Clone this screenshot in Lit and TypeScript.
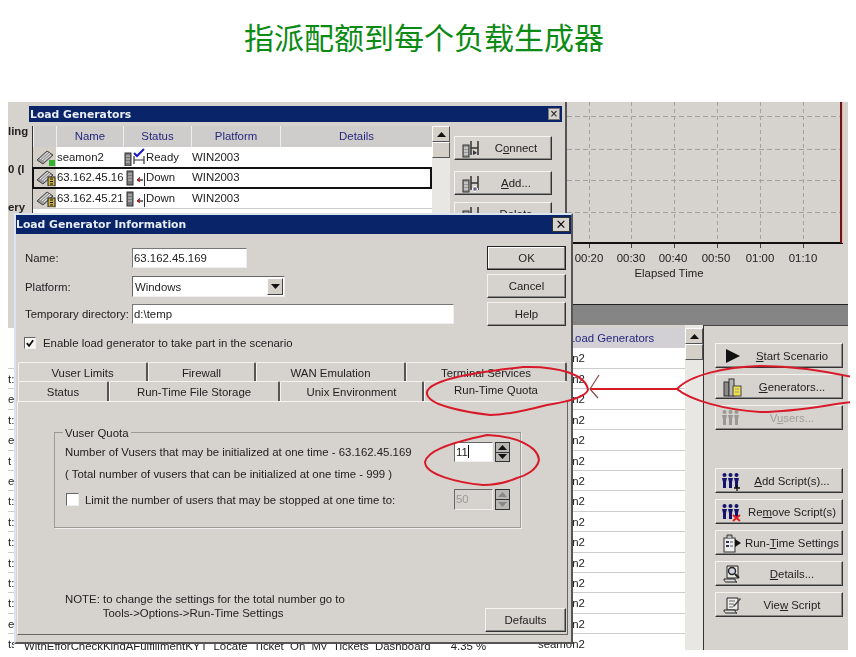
import { LitElement, html, css, svg } from "lit";
import { customElement } from "lit/decorators.js";

const ic = (w: number, h: number, body: any) => html`<svg class="ic" width=${w} height=${h} viewBox="0 0 ${w} ${h}">${body}</svg>`;

const machine = (badge: "green" | "lock") => ic(22, 18, svg`
  <path d="M3 12 L13 3 L19 7 L9 16 Z" fill="#9a9a9a" stroke="#444" stroke-width="1"/>
  <path d="M6 11 L14 4 M8 12 L16 5 M10 13 L17 7" stroke="#e8e8e8" stroke-width="1"/>
  ${badge === "green"
    ? svg`<rect x="15" y="12" width="6" height="6" fill="#2fb52f"/>`
    : svg`<rect x="14" y="9" width="7" height="9" fill="#c9b24a" stroke="#222"/><path d="M16 11h3M16 13.500h3M16 16h3" stroke="#111"/>`}
`);
const statusReady = ic(22, 18, svg`
  <rect x="1" y="5" width="6" height="13" fill="#777" stroke="#333"/>
  <path d="M2 8h4M2 11h4M2 14h4" stroke="#ccc"/>
  <path d="M10 8v8M20 8v8M10 12h10" stroke="#333" stroke-width="1.200" fill="none"/>
  <path d="M10 5l3 3 7-7" stroke="#1a1ac8" stroke-width="2" fill="none"/>
`);
const statusDown = ic(22, 18, svg`
  <rect x="3" y="3" width="6" height="14" fill="#777" stroke="#333"/>
  <path d="M4 6h4M4 9h4M4 12h4" stroke="#ccc"/>
  <path d="M13 12h6" stroke="#444" stroke-width="1.500"/><path d="M16 9l-3 3 3 2" fill="#b33" stroke="#522" stroke-width=".7"/>
  <path d="M20.500 5v13" stroke="#333"/>
`);
const hostIcon = (plus: boolean) => ic(20, 20, svg`
  <rect x="2" y="7" width="6" height="12" fill="#999" stroke="#333"/>
  <path d="M3 10h4M3 13h4M3 16h4" stroke="#eee"/>
  <path d="M10 3v14M17 3v14M10 10h7" stroke="#333" stroke-width="1.500" fill="none"/>
  ${plus ? svg`<path d="M14 13v6M11 16h6" stroke="#fff" stroke-width="2"/><path d="M14 14v4M12 16h4" stroke="#336" stroke-width="1"/>` : svg`<path d="M12 12l4 3-4 2z" fill="#334"/>`}
`);
const playIcon = ic(20, 18, svg`<path d="M4 2 L18 9 L4 16 Z" fill="#111"/>`);
const genIcon = ic(20, 20, svg`
  <rect x="2" y="5" width="5" height="14" fill="#8a8a8a" stroke="#333"/>
  <rect x="7" y="2" width="5" height="17" fill="#b5b5b5" stroke="#333"/>
  <rect x="11" y="9" width="8" height="10" fill="#f0e04a" stroke="#444"/>
  <path d="M13 12h4M13 15h4" stroke="#998"/>
`);
const person = (x: number, c: string) => svg`<circle cx=${x + 2.500} cy="4" r="2" fill=${c}/><path d="M${x} 7h5l-1 4v6h-3v-6z" fill=${c}/>`;
const people = (c: string, extra?: any) => ic(20, 20, svg`${person(0, c)}${person(6, c)}${person(12, c)}${extra ?? ""}`);
const vusersIc = people("#9a9894");
const addIc = people("#14146e", svg`<path d="M15 14v6M12 17h6" stroke="#111" stroke-width="1.300"/>`);
const remIc = people("#14146e", svg`<path d="M11 13l7 6M18 13l-7 6" stroke="#e02020" stroke-width="2"/>`);
const rtIc = ic(20, 20, svg`
  <rect x="2" y="5" width="11" height="14" fill="#eee" stroke="#333"/>
  <rect x="4" y="8" width="3" height="2" fill="#335"/><rect x="4" y="12" width="3" height="2" fill="#335"/>
  <path d="M8 9h3M8 13h3" stroke="#555"/><path d="M5 5V2h5v3" fill="#bbb" stroke="#333"/>
  <path d="M13 6l6 4-6 4z" fill="#111"/>
`);
const detailsIc = ic(20, 20, svg`
  <path d="M5 2h11v12H5z" fill="#e8e8e4" stroke="#222"/>
  <path d="M2 15h11c0 2 1 3 2 3H4c-1 0-2-1-2-3z" fill="#ddd" stroke="#222"/>
  <circle cx="10" cy="7" r="3.500" fill="#cfd6e0" stroke="#222" stroke-width="1.400"/>
  <path d="M13 10l4 4" stroke="#222" stroke-width="2"/>
`);
const viewIc = ic(20, 20, svg`
  <path d="M5 3h11v12H5z" fill="#eee" stroke="#222"/>
  <path d="M2 15h11c0 2 1 3 2 3H4c-1 0-2-1-2-3z" fill="#ddd" stroke="#222"/>
  <path d="M7 6h6M7 9h5M7 12h4" stroke="#666"/>
  <path d="M11 11l7-8 1 1-7 8z" fill="#444"/>
`);
const upArrow = html`<svg width="9" height="5" viewBox="0 0 9 5"><path d="M4.500 0L9 5H0z" fill="#111"/></svg>`;
const downArrow = html`<svg width="9" height="5" viewBox="0 0 9 5"><path d="M4.500 5L9 0H0z" fill="#111"/></svg>`;
const check = html`<svg width="11" height="11" viewBox="0 0 11 11"><path d="M2 5l2.500 3L9 2" stroke="#111" stroke-width="2" fill="none"/></svg>`;

const leftFrag = ["", "t:", "e", "t:", "e", "t", "e", "t:", "t:", "t:", "t:", "t:", "t:", "e", "ts"];

const vGrid = [24.5, 66.5, 109.5, 152.5, 195.5, 238.5];
const hGrid = [14.5, 47.5, 78.5, 110.5];
const timeLabels: [number, string][] = [[24, "00:20"], [66, "00:30"], [108, "00:40"], [151, "00:50"], [195, "01:00"], [238, "01:10"]];

@customElement("app-root")
export class AppRoot extends LitElement {
  static styles = css`
    :host { display: block; position: relative; width: 856px; height: 657px; background: #fff; overflow: hidden;
      font: 11.400px/14px "Liberation Sans", Arial, sans-serif; color: #222; }
    .title { margin: 0; height: 76px; padding-right: 8px; text-align: center;
      font: 400 30px/72px "Noto Sans CJK SC", sans-serif; color: #0b8a14; }
    .shot { position: relative; margin: 26px 0 0 8px; width: 840px; height: 548px; overflow: hidden; background: #d6d3ce; filter: blur(.35px); }
    .top { display: flex; height: 223px; }
    .left { width: 557px; padding-top: 22px; font-weight: 700; color: #222; display: flex; flex-direction: column; gap: 24px; overflow: hidden; }
    .left div { width: 20px; overflow: hidden; white-space: nowrap; height: 14px; }
    .rightcol { width: 283px; display: flex; flex-direction: column; }
    .chart { display: block; height: 202px; }
    .chart text { font: 11.400px "Liberation Sans", Arial, sans-serif; fill: #222; }
    .band { height: 21px; background: #858585; border-top: 1px solid #222; box-sizing: border-box; }
    .bottom { display: flex; height: 325px; }
    .table { width: 677px; padding-top: 3px; }
    .thead, .trow { display: grid; grid-template-columns: 6px 1fr 147px; box-sizing: border-box; height: 20.430px; line-height: 20px; }
    .thead { background: #d2d0d4; color: #26267e; }
    .thead .c1 { background: #fff; }
    .thead .c3 { text-align: center; white-space: nowrap; }
    .trow { background: #fff; border-bottom: 1px solid #ccc; }
    .c1 { overflow: hidden; white-space: nowrap; }
    .c2 { display: flex; gap: 20px; padding: 2px 0 0 10px; white-space: pre; overflow: hidden; }
    .scroll { width: 18px; background: #e9e7e3; flex: none; }
    .sbtn { box-sizing: border-box; width: 100%; background: #d4d0c8; display: flex; align-items: center; justify-content: center;
      border: 1px solid; border-color: #fff #555 #555 #fff; }
    .sup { height: 16px; } .sth { height: 16px; }
    .bscroll { padding-top: 3px; }
    .side { flex: 1; border-left: 1px solid #333; padding: 17px 5px 0 11px; display: flex; flex-direction: column; gap: 6px; border-top: 1px solid #444; box-sizing: border-box; }
    .side .gapped { margin-top: 32px; }
    .btn { box-sizing: border-box; display: flex; align-items: center; background: #d6d3ce; color: #222; height: 25px; white-space: nowrap;
      border: 1px solid; border-color: #f4f3f0 #333 #333 #f4f3f0; box-shadow: inset -1px -1px #8a8a88; padding-left: 6px; }
    .btn .lbl { flex: 1; text-align: center; }
    .btn.disabled { color: #a09e9a; }
    .btn u { text-underline-offset: 1px; }
    .ic { display: block; flex: none; }
    .lg { position: absolute; left: 20px; top: 3px; width: 537px; height: 125px; background: #d6d3ce; box-sizing: border-box; padding: 1px 3px 0 1px; }
    .tbar { background: #0a246a; color: #fff; display: flex; align-items: center; justify-content: space-between;
      font: 700 10.800px "DejaVu Sans", Verdana, sans-serif; }
    .lg .tbar { height: 16px; padding: 0 2px 0 1px; color: #e8eef5; }
    .x { box-sizing: border-box; width: 12px; height: 12px; background: #d6d3ce; border: 1px solid #777; color: #333; font: 700 10px/10px "DejaVu Sans", sans-serif; text-align: center; }
    .lgbody { display: flex; padding: 4px 0 0 3px; }
    .grid { width: 400px; background: #fff; border-left: 1px solid #333; box-sizing: border-box; }
    .lgh, .lgr { display: grid; grid-template-columns: 23px 67px 68px 89px 152px; height: 20.500px; box-sizing: border-box; align-items: center; position: relative; }
    .lgh { background: #cfcdcb; color: #26267e; text-align: center; height: 21px; }
    .lgh span { border-left: 1px solid #eee; height: 100%; line-height: 21px; }
    .lgr { border-bottom: 1px solid #ccc; white-space: nowrap; }
    .lgr.sel { outline: 2px solid #111; outline-offset: -1px; z-index: 1; width: 398px; }
    .lgr .hc { background: #d4d0c8; height: 100%; display: flex; align-items: center; }
    .lgr span { overflow: hidden; padding-left: 1px; display: flex; align-items: center; }
    .lgscroll { width: 18px; background: #e9e7e3; }
    .lgbtns { margin-left: 4px; width: 98px; padding-top: 10px; display: flex; flex-direction: column; }
    .lgbtns .btn { height: 24px; }
    .lgbtns .m1 { margin-top: 11px; } .lgbtns .m2 { margin-top: 7px; }
    .dlg { position: absolute; left: 6px; top: 111px; width: 559px; height: 431px; box-sizing: border-box; background: #d6d3ce;
      border: 2px solid; border-color: #d8e4f0 #555 #555 #d8e4f0; }
    .dlg > .tbar { height: 19px; padding: 0 1px 0 0; color: #e8eef5; }
    .dlg .xb { box-sizing: border-box; width: 18px; height: 15px; background: #d6d3ce; border: 1px solid #333; color: #111; font: 700 13px/13px "DejaVu Sans", sans-serif; text-align: center; }
    .dtop { display: flex; justify-content: space-between; padding: 12px 5px 0 9px; }
    .form { margin-top: 2px; display: flex; flex-direction: column; }
    .frow { display: grid; grid-template-columns: 107px auto; align-items: center; height: 20px; justify-content: start; white-space: nowrap; }
    .frow.plat { height: 21px; margin-top: 8px; } .frow.tmp { margin-top: 7px; }
    .input { box-sizing: border-box; background: #fff; height: 100%; border: 1px solid; border-color: #777 #eee #eee #777; padding: 2px 1px; white-space: nowrap; }
    .w115 { width: 115px; } .w322 { width: 322px; }
    .select { box-sizing: border-box; width: 153px; height: 100%; background: #fff; border: 1px solid; border-color: #666 #eee #eee #666; display: flex; align-items: center; justify-content: space-between; padding: 0 1px 0 2px; }
    .selbtn { box-sizing: border-box; width: 16px; height: 17px; background: #d4d0c8; border: 1px solid; border-color: #fff #444 #444 #fff; display: flex; align-items: center; justify-content: center; }
    .dbtns { display: flex; flex-direction: column; gap: 4px; width: 79px; }
    .dbtns .btn { height: 24px; padding-left: 0; }
    .dbtns .btn.def { border-color: #222; box-shadow: inset -1px -1px #777, inset 1px 1px #fff; }
    .enable { display: flex; align-items: center; gap: 7px; margin: 11px 0 0 8px; height: 12px; }
    .cb { box-sizing: border-box; flex: none; background: #f6f6f4; border: 1px solid; border-color: #666 #eee #eee #666; display: flex; align-items: center; justify-content: center; }
    .cb12 { width: 12px; height: 12px; } .cb13 { width: 13px; height: 13px; background: #fff; }
    .tabs { margin: 13px 2px 0 2px; }
    .tabrow { display: grid; text-align: center; }
    .tr1 { grid-template-columns: 130px 108px 150px 161px; height: 19px; }
    .tr2 { grid-template-columns: 91px 171px 144px 143px; height: 20px; }
    .tab { box-sizing: border-box; border-top: 1px solid #f4f3f0; border-left: 1px solid #f4f3f0; border-right: 2px solid #555; border-radius: 2px 2px 0 0; padding-top: 3px; white-space: nowrap; overflow: hidden; }
    .tab.active { border-right: 0; padding-top: 1px; }
    .panel { box-sizing: border-box; margin: 0 3px 0 1px; height: 234px; border: 1px solid; border-color: #f4f3f0 #666 #666 #f4f3f0; display: flex; flex-direction: column; padding: 30px 1px 1px 36px; }
    .group { box-sizing: border-box; width: 467px; height: 96px; border: 1px solid #9c9a96; box-shadow: 1px 1px #eee; padding-left: 10px; }
    .legend { display: block; width: fit-content; line-height: 14px; margin: -7px 0 2px -2px; padding: 0 2px; background: #d6d3ce; }
    .grow { display: grid; grid-template-columns: 389px 39px 17px; height: 20px; align-items: center; white-space: nowrap; }
    .grow.two { height: 24px; display: block; line-height: 24px; }
    .grow.three { height: 21px; margin-top: 3px; }
    .limit { display: flex; align-items: center; gap: 6px; margin-left: 1px; }
    .num { box-sizing: border-box; height: 100%; border: 1px solid; border-color: #666 #eee #eee #666; background: #fff; padding: 2px 1px; }
    .num.off { background: #d6d3ce; color: #999; }
    .caret { display: inline-block; width: 1px; height: 13px; background: #111; vertical-align: -2px; }
    .spin { margin-left: 2px; width: 15px; height: 100%; display: flex; flex-direction: column; border: 1px solid #333; box-sizing: border-box; background: #b9b7b3; }
    .spin div { flex: 1; display: flex; align-items: center; justify-content: center; border-bottom: 1px solid #333; }
    .spin div:last-child { border-bottom: 0; }
    .spin.off svg path { fill: #888; }
    .pfoot { margin-top: auto; display: flex; justify-content: space-between; align-items: flex-end; margin-left: 11px; }
    .note { padding-bottom: 13px; white-space: pre; }
    .pfoot .btn { width: 81px; height: 24px; padding-left: 0; margin-bottom: 1px; }
    .marks { position: absolute; left: 0; top: 0; pointer-events: none; }
  `;

  render() {
    return html`
      <h1 class="title">指派配额到每个负载生成器</h1>
      <div class="shot">
        <div class="top">
          <div class="left"><div>ling</div><div>0 (l</div><div>ery</div></div>
          <div class="rightcol">
            <svg class="chart" width="283" height="202" viewBox="0 0 283 202">
              <line x1="1" y1="0" x2="1" y2="202" stroke="#555" stroke-width="2"/>
              ${hGrid.map(y => svg`<line x1="2" x2="275" y1=${y} y2=${y} stroke="#a3a19e" stroke-dasharray="5 3"/>`)}
              ${vGrid.map(x => svg`<line x1=${x} x2=${x} y1="0" y2="140" stroke="#a3a19e" stroke-dasharray="4 3"/>
                <line x1=${x} x2=${x} y1="141" y2="146" stroke="#444"/>`)}
              <line x1="0" x2="278" y1="141" y2="141" stroke="#111" stroke-width="2"/>
              <line x1="276" x2="276" y1="0" y2="141" stroke="#6e1414" stroke-width="2"/>
              <line x1="277.500" x2="277.500" y1="0" y2="141" stroke="#e6b4b0"/>
              ${timeLabels.map(([x, t]) => svg`<text x=${x} y="160" text-anchor="middle">${t}</text>`)}
              <text x="104" y="175" text-anchor="middle">Elapsed Time</text>
            </svg>
            <div class="band"></div>
          </div>
        </div>
        <div class="bottom">
          <div class="table">
            <div class="thead"><span class="c1"></span><span></span><span class="c3">Load Generators</span></div>
            ${leftFrag.map((f, i) => html`<div class="trow">
              <span class="c1">${f}</span>
              <span class="c2">${i === 14 ? html`<span>WithEfforCheckKindAFulfillmentKYT  Locate  Ticket  On  My  Tickets  Dashboard</span><span>4.35 %</span>` : ""}</span>
              <span>seamon2</span>
            </div>`)}
          </div>
          <div class="scroll bscroll">
            <div class="sbtn sup">${upArrow}</div><div class="sbtn sth"></div>
          </div>
          <div class="side">
            <div class="btn">${playIcon}<span class="lbl"><u>S</u>tart Scenario</span></div>
            <div class="btn">${genIcon}<span class="lbl"><u>G</u>enerators...</span></div>
            <div class="btn disabled">${vusersIc}<span class="lbl">V<u>u</u>sers...</span></div>
            <div class="btn gapped">${addIc}<span class="lbl"><u>A</u>dd Script(s)...</span></div>
            <div class="btn">${remIc}<span class="lbl">Re<u>m</u>ove Script(s)</span></div>
            <div class="btn">${rtIc}<span class="lbl">Run-<u>T</u>ime Settings</span></div>
            <div class="btn">${detailsIc}<span class="lbl"><u>D</u>etails...</span></div>
            <div class="btn">${viewIc}<span class="lbl">Vie<u>w</u> Script</span></div>
          </div>
        </div>

        <div class="lg">
          <div class="tbar"><span>Load Generators</span><span class="x">×</span></div>
          <div class="lgbody">
            <div class="grid">
              <div class="lgh"><span></span><span>Name</span><span>Status</span><span>Platform</span><span>Details</span></div>
              <div class="lgr"><span class="hc">${machine("green")}</span><span>seamon2</span><span>${statusReady}Ready</span><span>WIN2003</span><span></span></div>
              <div class="lgr sel"><span class="hc">${machine("lock")}</span><span>63.162.45.169</span><span>${statusDown}Down</span><span>WIN2003</span><span></span></div>
              <div class="lgr"><span class="hc">${machine("lock")}</span><span>63.162.45.214</span><span>${statusDown}Down</span><span>WIN2003</span><span></span></div>
            </div>
            <div class="lgscroll"><div class="sbtn sup">${upArrow}</div><div class="sbtn sth"></div></div>
            <div class="lgbtns">
              <div class="btn">${hostIcon(false)}<span class="lbl">C<u>o</u>nnect</span></div>
              <div class="btn m1">${hostIcon(true)}<span class="lbl"><u>A</u>dd...</span></div>
              <div class="btn m2">${hostIcon(false)}<span class="lbl">Delete</span></div>
            </div>
          </div>
        </div>

        <div class="dlg">
          <div class="tbar"><span>Load Generator Information</span><span class="xb">✕</span></div>
          <div class="dtop">
            <div class="form">
              <div class="frow"><span>Name:</span><div class="input w115">63.162.45.169</div></div>
              <div class="frow plat"><span>Platform:</span>
                <div class="select"><span>Windows</span><span class="selbtn">${downArrow}</span></div></div>
              <div class="frow tmp"><span>Temporary directory:</span><div class="input w322">d:\\temp</div></div>
            </div>
            <div class="dbtns">
              <div class="btn def"><span class="lbl">OK</span></div>
              <div class="btn"><span class="lbl">Cancel</span></div>
              <div class="btn"><span class="lbl">Help</span></div>
            </div>
          </div>
          <div class="enable"><span class="cb cb12">${check}</span><span>Enable load generator to take part in the scenario</span></div>
          <div class="tabs">
            <div class="tabrow tr1">
              <div class="tab">Vuser Limits</div><div class="tab">Firewall</div><div class="tab">WAN Emulation</div><div class="tab">Terminal Services</div>
            </div>
            <div class="tabrow tr2">
              <div class="tab">Status</div><div class="tab">Run-Time File Storage</div><div class="tab">Unix Environment</div><div class="tab active">Run-Time Quota</div>
            </div>
          </div>
          <div class="panel">
            <div class="group">
              <span class="legend">Vuser Quota</span>
              <div class="grow"><span>Number of Vusers that may be initialized at one time - 63.162.45.169</span>
                <div class="num">11<span class="caret"></span></div>
                <div class="spin"><div>${upArrow}</div><div>${downArrow}</div></div></div>
              <div class="grow two">( Total number of vusers that can be initialized at one time - 999 )</div>
              <div class="grow three"><div class="limit"><span class="cb cb13"></span><span>Limit the number of users that may be stopped at one time to:</span></div>
                <div class="num off">50</div>
                <div class="spin off"><div>${upArrow}</div><div>${downArrow}</div></div></div>
            </div>
            <div class="pfoot">
              <div class="note">NOTE: to change the settings for the total number go to
            Tools->Options->Run-Time Settings</div>
              <div class="btn"><span class="lbl">Defaults</span></div>
            </div>
          </div>
        </div>
      </div>
      <svg class="marks" width="850" height="657" viewBox="0 0 850 657" fill="none" stroke="#d81a28" stroke-width="2">
        <path d="M427 392 C430 380 470 373 523 367 C560 366 586 375 588 390 C585 398 565 402 547 405 C520 412 505 415 490 415 C465 412 425 405 427 392 Z"/>
        <path d="M425 462 C427 452 445 444 487 435 C515 436 538 446 539 460 C537 470 525 476 517 478 C505 483 495 485 483 485 C460 483 425 475 425 462 Z"/>
        <path d="M852 377 C820 370 790 366 760 366 C725 367 690 375 677 389 C690 400 725 410 760 412 C795 412 825 405 852 402"/>
        <path d="M677 389 L632 389 L590 389"/>
        <path d="M590 389 L599 375 M590 389 L598 398" stroke="#8a4a48" stroke-width="1.200"/>
      </svg>
    `;
  }
}
